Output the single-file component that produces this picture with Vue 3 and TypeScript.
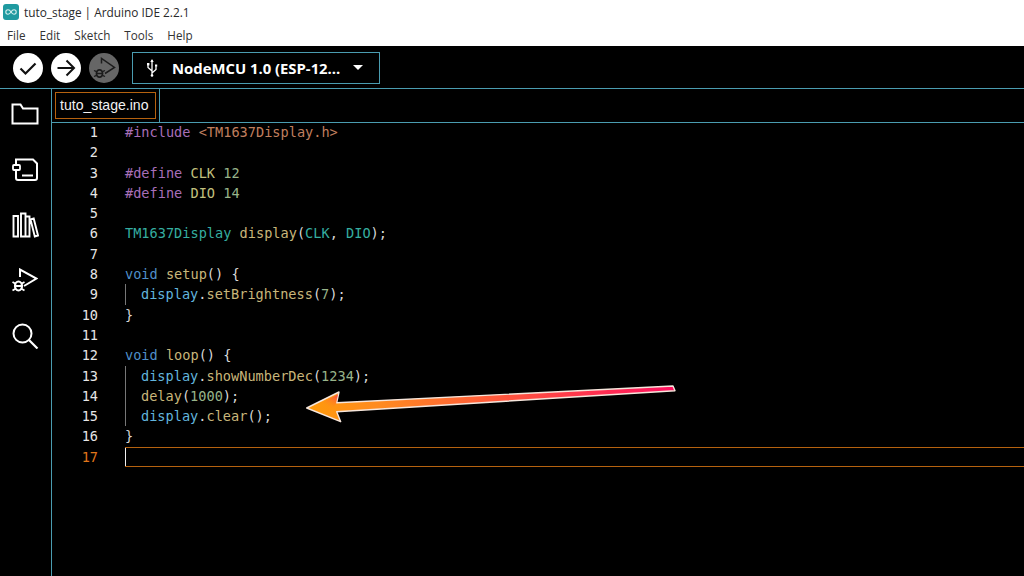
<script setup lang="ts">
type Tok = { t: string; c?: string }
const K = 'kw', P = 'pre', S = 'str', T = 'type', F = 'fn', V = 'var', N = 'num', D = 'def'
const lines: { toks: Tok[]; indent?: boolean }[] = [
  { toks: [{ t: '#include', c: P }, { t: ' ' }, { t: '<TM1637Display.h>', c: S }] },
  { toks: [] },
  { toks: [{ t: '#define', c: P }, { t: ' ' }, { t: 'CLK', c: D }, { t: ' ' }, { t: '12', c: N }] },
  { toks: [{ t: '#define', c: P }, { t: ' ' }, { t: 'DIO', c: D }, { t: ' ' }, { t: '14', c: N }] },
  { toks: [] },
  { toks: [{ t: 'TM1637Display', c: T }, { t: ' ' }, { t: 'display', c: F }, { t: '(' }, { t: 'CLK', c: T }, { t: ', ' }, { t: 'DIO', c: T }, { t: ');' }] },
  { toks: [] },
  { toks: [{ t: 'void', c: K }, { t: ' ' }, { t: 'setup', c: F }, { t: '() {' }] },
  { indent: true, toks: [{ t: 'display', c: V }, { t: '.' }, { t: 'setBrightness', c: F }, { t: '(' }, { t: '7', c: N }, { t: ');' }] },
  { toks: [{ t: '}' }] },
  { toks: [] },
  { toks: [{ t: 'void', c: K }, { t: ' ' }, { t: 'loop', c: F }, { t: '() {' }] },
  { indent: true, toks: [{ t: 'display', c: V }, { t: '.' }, { t: 'showNumberDec', c: F }, { t: '(' }, { t: '1234', c: N }, { t: ');' }] },
  { indent: true, toks: [{ t: 'delay', c: F }, { t: '(' }, { t: '1000', c: N }, { t: ');' }] },
  { indent: true, toks: [{ t: 'display', c: V }, { t: '.' }, { t: 'clear', c: F }, { t: '();' }] },
  { toks: [{ t: '}' }] },
  { toks: [] },
]
const menus = ['File', 'Edit', 'Sketch', 'Tools', 'Help']
</script>

<template>
  <div class="app">
    <header class="chrome">
      <div class="title">
        <svg class="logo" width="16" height="16" viewBox="0 0 16 16">
          <rect width="16" height="16" rx="3" fill="#1f9aa0" />
          <path d="M8 8c-1-1.600-1.900-2.200-3-2.200a2.200 2.200 0 0 0 0 4.400c1.100 0 2-.6 3-2.200zm0 0c1-1.600 1.900-2.200 3-2.200a2.200 2.200 0 0 1 0 4.400c-1.100 0-2-.6-3-2.200z" fill="none" stroke="#d6f0ee" stroke-width="1.100" />
        </svg>
        <span>tuto_stage | Arduino IDE 2.2.1</span>
      </div>
      <nav class="menu"><span v-for="m in menus" :key="m">{{ m }}</span></nav>
    </header>

    <div class="toolbar">
      <button class="round">
        <svg width="30" height="30" viewBox="0 0 30 30"><path d="M7.500 15.500l5 5 10-10" fill="none" stroke="#111" stroke-width="2.200" /></svg>
      </button>
      <button class="round">
        <svg width="30" height="30" viewBox="0 0 30 30"><path d="M6.500 15h16M15.500 7.500l7.500 7.500-7.500 7.500" fill="none" stroke="#111" stroke-width="2" /></svg>
      </button>
      <button class="round dim">
        <svg width="30" height="30" viewBox="0 0 30 30">
          <path d="M12.500 10.500V5.500L25.500 14.500 16 20.500" fill="none" stroke="#1c1c1c" stroke-width="1.500" />
          <ellipse cx="10.500" cy="20.500" rx="3" ry="3.700" fill="none" stroke="#1c1c1c" stroke-width="1.800" />
          <path d="M7.500 20.500h6M5 17.500l2.500 1.200M5 23.500l2.500-1.200M16 17.500l-2.500 1.200M16 23.500l-2.500-1.200" stroke="#1c1c1c" stroke-width="1.300" />
        </svg>
      </button>
      <div class="board">
        <svg width="12" height="18" viewBox="0 0 12 18"><path d="M6 1v16M6 12L2 8.500V6M6 14l4-3.500V7.500" fill="none" stroke="#fff" stroke-width="1.300" /><path d="M6 0L4.300 3h3.400z" fill="#fff" /><rect x="1" y="4" width="2.400" height="2.400" fill="#fff" /><rect x="9" y="5.500" width="2.200" height="2.200" fill="#fff" /><circle cx="6" cy="16.500" r="1.300" fill="#fff" /></svg>
        <span class="board-name">NodeMCU 1.0 (ESP-12...</span>
        <i class="caret"></i>
      </div>
    </div>

    <div class="body">
      <aside class="side">
        <svg width="28" height="26" viewBox="0 0 28 26"><path d="M1.500 4.500V22.500H26.500V7.500H12L9.500 3.500H1.500z" fill="none" stroke="#fff" stroke-width="2" /></svg>
        <svg width="28" height="26" viewBox="0 0 28 26">
          <path d="M5 8V2.500H22L26 6.500V21a2 2 0 0 1-2 2H7a2 2 0 0 1-2-2V14" fill="none" stroke="#fff" stroke-width="2" />
          <rect x="2" y="8" width="7" height="5" rx="1" fill="none" stroke="#fff" stroke-width="1.800" />
          <path d="M11 18.500h11" stroke="#fff" stroke-width="2" />
        </svg>
        <svg width="28" height="26" viewBox="0 0 28 26">
          <path d="M2.500 4h4.500v20.500H2.500zM10 1.500h4.500v23H10zM14.500 4.500h4v20h-4zM19.500 7.500l3.200-1 4.300 17-3.200 1z" fill="none" stroke="#fff" stroke-width="1.900" />
        </svg>
        <svg width="26" height="26" viewBox="0 0 26 26">
          <path d="M8 9V1.500L24.500 10.500 12 18" fill="none" stroke="#fff" stroke-width="2" />
          <ellipse cx="6.500" cy="18" rx="3.500" ry="4.500" fill="none" stroke="#fff" stroke-width="2.200" />
          <path d="M3 18h7M.5 14l3 1.800M.5 22.500l3-1.800M12.500 14l-3 1.800M12.500 22.500l-3-1.800" stroke="#fff" stroke-width="1.800" />
        </svg>
        <svg width="27" height="26" viewBox="0 0 27 26"><circle cx="10.500" cy="10.500" r="9" fill="none" stroke="#fff" stroke-width="2" /><path d="M17 17l8.500 8.500" stroke="#fff" stroke-width="2.200" /></svg>
      </aside>

      <main class="editor">
        <div class="tabs">
          <div class="tab"><span>tuto_stage.ino</span></div>
        </div>
        <div class="code">
          <div v-for="(l, i) in lines" :key="i" class="row" :class="{ current: i === lines.length - 1 }">
            <span class="ln">{{ i + 1 }}</span>
            <span class="src" :class="{ guide: l.indent }">
              <span v-for="(k, j) in l.toks" :key="j" :class="k.c">{{ k.t }}</span>
            </span>
          </div>
        </div>
      </main>
    </div>

    <svg class="arrow" width="390" height="50" viewBox="0 0 390 50">
      <defs>
        <linearGradient id="ag" gradientUnits="userSpaceOnUse" x1="7" y1="28" x2="375" y2="8">
          <stop offset="0" stop-color="#ff9a0a" />
          <stop offset="0.2" stop-color="#ff8a20" />
          <stop offset="0.5" stop-color="#ff5a3a" />
          <stop offset="1" stop-color="#ff1060" />
        </linearGradient>
        <linearGradient id="ah" gradientUnits="userSpaceOnUse" x1="38" y1="12" x2="30" y2="28">
          <stop offset="0" stop-color="#ff2a55" />
          <stop offset="1" stop-color="#ff8a20" stop-opacity="0" />
        </linearGradient>
      </defs>
      <path d="M6.700 28L39 12 36.700 22.700 373 6 375 10.700 36.700 31.700 40.700 41.700z" fill="url(#ag)" stroke="#f6e6dc" stroke-width="1.400" stroke-linejoin="round" />
      <path d="M12 27.500L38 14.500 36 24 33 27.500z" fill="url(#ah)" />
    </svg>
  </div>
</template>

<style>
html, body { margin: 0; background: #000; }
</style>

<style scoped>
.app {
  position: relative;
  width: 1024px;
  height: 576px;
  overflow: hidden;
  background: #000;
  display: flex;
  flex-direction: column;
  font-family: "Liberation Sans", Arial, sans-serif;
}
.chrome {
  background: #fff;
  height: 46px;
  color: #222;
  flex: none;
}
.title {
  height: 24px;
  display: flex;
  align-items: center;
  gap: 5px;
  padding-left: 3px;
  font-family: "Open Sans", sans-serif;
  font-size: 11.850px;
  color: #2a2a2a;
}
.logo { flex: none; }
.menu {
  height: 21px;
  display: flex;
  align-items: center;
  gap: 14px;
  padding-left: 7px;
  font-family: "Open Sans", sans-serif;
  font-size: 11.700px;
  color: #333;
}
.toolbar {
  flex: none;
  height: 43px;
  box-sizing: border-box;
  display: flex;
  align-items: center;
  padding: 1px 0 0 13px;
  gap: 8px;
  border-bottom: 1px solid #4a9cb0;
}
.round {
  width: 30px;
  height: 30px;
  border-radius: 50%;
  border: 0;
  padding: 0;
  background: #fff;
  display: flex;
  align-items: center;
  justify-content: center;
}
.round.dim { background: #666; }
.board {
  margin-left: 5px;
  width: 248px;
  height: 32px;
  box-sizing: border-box;
  border: 1px solid #4a9cb0;
  display: flex;
  align-items: center;
  padding-left: 13px;
  color: #fff;
}
.board-name {
  margin-left: 14px;
  font-family: "Open Sans", sans-serif;
  font-weight: 700;
  font-size: 14.850px;
  white-space: nowrap;
}
.caret {
  margin-left: 13px;
  width: 0;
  height: 0;
  border-left: 5px solid transparent;
  border-right: 5px solid transparent;
  border-top: 5px solid #fff;
}
.body {
  flex: 1;
  display: flex;
  min-height: 0;
}
.side {
  flex: none;
  width: 52px;
  box-sizing: border-box;
  border-right: 1px solid #4a9cb0;
  display: flex;
  flex-direction: column;
  align-items: center;
  padding: 12px 1px 0 0;
  gap: 29.500px;
}
.side svg { flex: none; }
.editor { flex: 1; min-width: 0; }
.tabs {
  height: 34px;
  box-sizing: border-box;
  border-bottom: 1px solid #4a9cb0;
  display: flex;
}
.tab {
  width: 108px;
  box-sizing: border-box;
  border-right: 1px solid #4a9cb0;
  padding: 3px;
  display: flex;
}
.tab span {
  flex: 1;
  box-sizing: border-box;
  height: 27px;
  border: 1px solid #b5620f;
  color: #f2f2f2;
  font-size: 14.100px;
  line-height: 25px;
  padding-left: 4px;
  white-space: nowrap;
}
.code {
  margin-top: -1px;
  font-family: "DejaVu Sans Mono", monospace;
  font-size: 13.600px;
  color: #dcdcdc;
}
.row {
  height: 20.300px;
  line-height: 20.300px;
  display: flex;
  white-space: pre;
}
.ln {
  width: 46px;
  flex: none;
  text-align: right;
  color: #e6e6e6;
}
.src {
  margin-left: 27px;
  flex: 1;
  box-sizing: border-box;
  color: #d8d8d8;
}
.src.guide {
  padding-left: 16px;
  box-shadow: inset 1px 0 0 #777;
}
.current .ln { color: #e0761a; }
.current .src {
  border-top: 1px solid #b5620f;
  border-bottom: 1px solid #b5620f;
  box-shadow: inset 1px 0 0 #f0f0f0;
}
.kw { color: #4f8fc9; }
.pre { color: #a86fb8; }
.str { color: #c07f5e; }
.type { color: #35aea0; }
.fn { color: #c8b67a; }
.var { color: #62b5dd; }
.num { color: #98b48a; }
.def { color: #c2c07e; }
.arrow {
  position: absolute;
  left: 300px;
  top: 380px;
}
</style>
